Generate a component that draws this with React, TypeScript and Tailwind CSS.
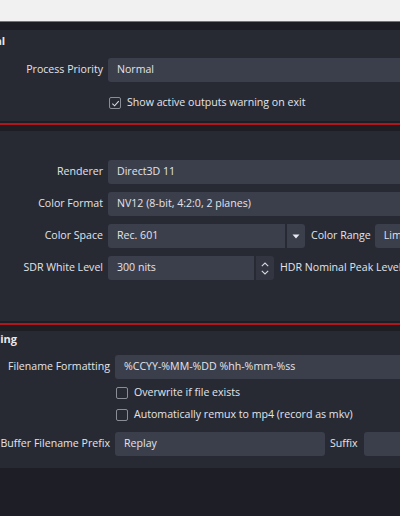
const font = { fontFamily: '"Open Sans", "Noto Sans", sans-serif' };

function Box({ text, className = "" }: { text?: string; className?: string }) {
  return (
    <div className={`h-6 rounded-[3px] bg-[#3b3e4b] px-[9px] flex items-center text-[10.6px] text-[#e3e4ea] whitespace-nowrap overflow-hidden ${className}`}>
      {text}
    </div>
  );
}

function Check({ checked, label }: { checked?: boolean; label: string }) {
  return (
    <div className="flex items-center gap-[6px] h-4 text-[10.6px] text-[#e3e4ea] whitespace-nowrap">
      <div className="w-[12px] h-[12px] rounded-[2px] border border-[#8b8d96] flex items-center justify-center">
        {checked && (
          <svg width="9" height="9" viewBox="0 0 10 10" fill="none" stroke="#d8d9de" strokeWidth="1.2">
            <path d="M1.5 5.2 L4 7.6 L8.6 2.4" />
          </svg>
        )}
      </div>
      <span>{label}</span>
    </div>
  );
}

function Row({ label, lw, children }: { label: string; lw: number; children: React.ReactNode }) {
  return (
    <div className="flex items-center h-8">
      <div
        className="text-right text-[10.6px] text-[#e3e4ea] whitespace-nowrap pr-[5px] shrink-0"
        style={{ width: lw }}
      >
        {label}
      </div>
      <div className="flex-1 flex items-center">{children}</div>
    </div>
  );
}

function Separator() {
  return (
    <div className="h-[10px] bg-[#1d1e24] flex flex-col">
      <div className="h-[2px]" />
      <div className="h-[2px] bg-[#b3151d]" />
    </div>
  );
}

export default function App() {
  return (
    <div className="w-[400px] h-[516px] overflow-hidden bg-[#1e1f26]" style={font}>
      <div className="h-[21px] bg-[#f1f1f1]" />
      <div className="h-px bg-[#747474]" />
      <div className="h-2 bg-[#1d1e24]" />

      <div className="ml-[-44px] w-[500px]">
        {/* General */}
        <div className="bg-[#272a33] h-[91px] pt-[3px]">
          <div className="pl-[6px] text-[11px] font-bold text-[#e8e9ee] h-[16px]">General</div>
          <div className="mt-[5px]">
            <Row label="Process Priority" lw={152}>
              <Box text="Normal" className="w-full" />
            </Row>
          </div>
          <div className="pl-[153px] mt-[9px]">
            <Check checked label="Show active outputs warning on exit" />
          </div>
        </div>

        <Separator />

        {/* Video */}
        <div className="bg-[#272a33] h-[190px] pt-[25px]">
          <Row label="Renderer" lw={152}>
            <Box text="Direct3D 11" className="w-full" />
          </Row>
          <Row label="Color Format" lw={152}>
            <Box text="NV12 (8-bit, 4:2:0, 2 planes)" className="w-full" />
          </Row>
          <Row label="Color Space" lw={152}>
            <Box text="Rec. 601" className="w-[177px] rounded-r-none" />
            <div className="h-6 w-[18px] ml-[2px] bg-[#3b3e4b] rounded-r-[3px] flex items-center justify-center">
              <svg width="8" height="5" viewBox="0 0 8 5">
                <path d="M0.5 0.5 L7.5 0.5 L4 4.5 Z" fill="#e8e9ee" />
              </svg>
            </div>
            <span className="ml-[6px] text-[10.6px] text-[#e3e4ea] whitespace-nowrap">Color Range</span>
            <Box text="Limited" className="ml-[4px] flex-1" />
          </Row>
          <Row label="SDR White Level" lw={152}>
            <Box text="300 nits" className="w-[146px] rounded-r-none" />
            <div className="h-6 w-[18px] ml-[2px] bg-[#333641] rounded-r-[3px] flex flex-col items-center justify-center gap-[3px]">
              <svg width="8" height="5" viewBox="0 0 8 5" fill="none" stroke="#d8d9de" strokeWidth="1.1">
                <path d="M0.8 4.2 L4 1 L7.2 4.2" />
              </svg>
              <svg width="8" height="5" viewBox="0 0 8 5" fill="none" stroke="#d8d9de" strokeWidth="1.1">
                <path d="M0.8 0.8 L4 4 L7.2 0.8" />
              </svg>
            </div>
            <span className="ml-[6px] text-[10.6px] text-[#e3e4ea] whitespace-nowrap">HDR Nominal Peak Level</span>
          </Row>
        </div>

        <Separator />

        {/* Recording */}
        <div className="bg-[#272a33] h-[137px]">
          <div className="pl-[6px] text-[11px] font-bold text-[#e8e9ee] h-[16px]">Recording</div>
          <div className="mt-[4px]">
            <Row label="Filename Formatting" lw={159}>
              <Box text="%CCYY-%MM-%DD %hh-%mm-%ss" className="w-full" />
            </Row>
          </div>
          <div className="pl-[160px] flex flex-col gap-[6px] mt-[2px]">
            <Check label="Overwrite if file exists" />
            <Check label="Automatically remux to mp4 (record as mkv)" />
          </div>
          <div className="mt-[5px]">
            <Row label="Replay Buffer Filename Prefix" lw={159}>
              <Box text="Replay" className="w-[210px]" />
              <span className="ml-[5px] text-[10.6px] text-[#e3e4ea]">Suffix</span>
              <Box className="ml-[6px] flex-1" />
            </Row>
          </div>
        </div>
      </div>
    </div>
  );
}
